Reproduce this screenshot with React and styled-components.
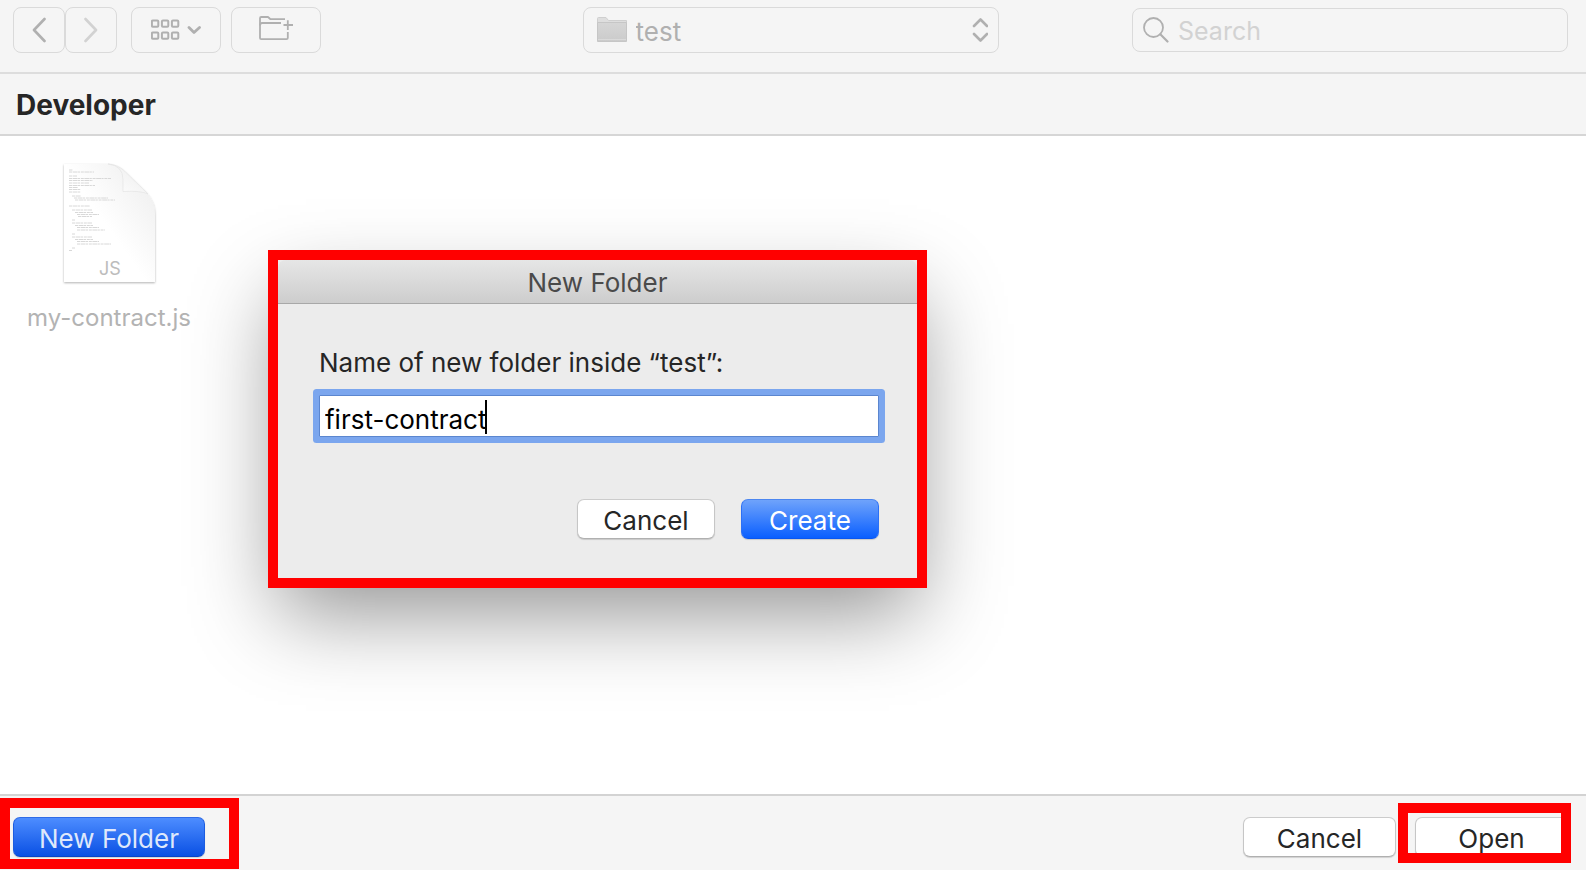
import React, { useLayoutEffect, useRef, useState } from "react";
import styled, { createGlobalStyle, css } from "styled-components";

const GlobalStyle = createGlobalStyle`
  *, *::before, *::after { box-sizing: border-box; }
  body { margin: 0; background: #f5f5f5; }
  body, button, input, select {
    font-family: Inter, "Liberation Sans", sans-serif;
    font-size: 26px;
  }
`;

const Window = styled.div`
  display: flex;
  flex-direction: column;
  min-height: 100vh;
  background: #f5f5f5;
  color: #262626;
`;

const Toolbar = styled.header`
  display: grid;
  grid-template-columns: 1fr minmax(200px, 416px) 1fr;
  align-items: center;
  padding: 7px 18px 19px 13px;
  border-bottom: 2px solid #dddddd;
`;

const ToolGroup = styled.div`
  display: flex;
  gap: ${(p) => p.$gap}px;
`;

const ToolButton = styled.button`
  display: flex;
  align-items: center;
  justify-content: center;
  width: ${(p) => p.$width}px;
  height: 46px;
  padding: 0;
  border: 1px solid #dadada;
  border-radius: 8px;
  background: #f5f5f5;
  color: ${(p) => (p.$faint ? "#d2d2d2" : "#b0b0b0")};
`;

const Field = styled.div`
  display: flex;
  align-items: center;
  height: ${(p) => p.$height}px;
  padding: 0 10px 0 13px;
  border: 1px solid #dadada;
  border-radius: 8px;
  color: #b0b0b0;
`;

const SearchField = styled(Field)`
  justify-self: end;
  width: 100%;
  max-width: 436px;
  padding: 0 10px;
`;

const bareControl = css`
  flex: 1;
  min-width: 0;
  height: 100%;
  padding: 2px 0 0;
  border: 0;
  outline: 0;
  background: transparent;
  appearance: none;
`;

const FolderSelect = styled.select`
  ${bareControl}
  margin-left: 9px;
  color: #b0b0b0;
`;

const SearchInput = styled.input`
  ${bareControl}
  margin-left: 9px;
  font-size: 25px;
  &::placeholder { color: #d2d2d2; opacity: 1; }
`;

const PathBar = styled.h1`
  margin: 0;
  padding: 2px 16px 0;
  border-bottom: 2px solid #d6d6d6;
  font-size: 28px;
  font-weight: 700;
  line-height: 58px;
`;

const Files = styled.main`
  position: relative;
  flex: 1;
  padding: 26px 18px;
  background: #ffffff;
`;

const FileItem = styled.figure`
  display: flex;
  flex-direction: column;
  align-items: center;
  gap: 16px;
  width: 182px;
  margin: 0;
  color: #b3b3b3;
`;

const FileName = styled.figcaption`
  font-size: 24px;
  line-height: 32px;
`;

const Dialog = styled.section`
  position: absolute;
  top: 114px;
  left: 268px;
  width: 659px;
  border: 10px solid #ff0000;
  background: #ececec;
  box-shadow: 0 36px 80px -10px rgba(0, 0, 0, 0.42);
`;

const DialogTitle = styled.h2`
  margin: 0;
  padding-top: 2px;
  border-bottom: 1px solid #a8a8a8;
  border-radius: 8px 8px 0 0;
  background: linear-gradient(#e6e6e6, #cdcdcd);
  color: #4a4a4a;
  font-size: 26px;
  font-weight: 400;
  line-height: 41px;
  text-align: center;
`;

const DialogForm = styled.form`
  display: flex;
  flex-direction: column;
  padding: 43px 38px 39px 41px;
`;

const DialogLabel = styled.label`
  margin-bottom: 16px;
  line-height: 32px;
`;

const NameField = styled.div`
  position: relative;
  margin-bottom: 62px;
`;

const NameInput = styled.input`
  display: block;
  width: 100%;
  height: 42px;
  padding: 6px 5px 0;
  border: 1px solid #5b86cf;
  border-radius: 1px;
  outline: 0;
  background: #ffffff;
  box-shadow: 0 0 0 6px #7ba6ee;
  color: #000000;
  caret-color: transparent;
`;

const Caret = styled.span`
  position: absolute;
  top: 5px;
  width: 2px;
  height: 34px;
  background: #000000;
`;

const DialogActions = styled.div`
  display: flex;
  justify-content: flex-end;
  gap: 26px;
`;

const fills = {
  plain: css`
    border-color: #cccccc #c6c6c6 #b0b0b0;
    background: #ffffff;
    color: #262626;
  `,
  primary: css`
    border-color: #4c86f0 #2c70f5 #0a56f0;
    background: linear-gradient(#6fa3fb, #0a5fff);
    color: #ffffff;
  `,
  pressed: css`
    border-color: #2f6be6 #1c5ce0 #0744c8;
    background: linear-gradient(#4d8dff, #0a50e4);
    color: #dfe8fb;
  `,
};

const PushButton = styled.button`
  width: ${(p) => p.$width}px;
  height: 40px;
  padding: 2px 0 0;
  border: 1px solid;
  border-radius: 7px;
  box-shadow: 0 1px 1px rgba(0, 0, 0, 0.15);
  ${(p) => fills[p.$fill]}
`;

const Footer = styled.footer`
  display: flex;
  justify-content: space-between;
  padding: 21px 18px 13px 13px;
  border-top: 2px solid #d3d3d3;
`;

const FooterActions = styled.div`
  display: flex;
  gap: 19px;
`;

const Marked = styled.div`
  position: relative;
  &::after {
    content: "";
    position: absolute;
    inset: ${(p) => p.$inset};
    border: 10px solid #ff0000;
    pointer-events: none;
  }
`;

const stroke = { fill: "none", stroke: "currentColor", strokeLinecap: "round", strokeLinejoin: "round" };

function Chevron({ flip }) {
  return (
    <svg width="14" height="26" viewBox="0 0 14 26" {...stroke} strokeWidth="2.6" aria-hidden="true">
      <path d={flip ? "M1.5 2 12 13 1.5 24" : "M12.5 2 2 13 12.5 24"} />
    </svg>
  );
}

function GridIcon() {
  return (
    <svg width="50" height="22" viewBox="0 0 50 22" {...stroke} aria-hidden="true">
      {[0, 10, 20].map((x) =>
        [1, 13].map((y) => (
          <rect key={`${x}-${y}`} x={x + 0.9} y={y + 0.4} width="6.4" height="6.4" rx="1" strokeWidth="2" />
        ))
      )}
      <path d="M38 8.5 43 13.5 48.5 8.5" strokeWidth="2.8" />
    </svg>
  );
}

function NewFolderIcon() {
  return (
    <svg width="34" height="28" viewBox="0 0 34 28" {...stroke} strokeWidth="1.8" strokeLinecap="butt" aria-hidden="true">
      <path d="M26 3.2H11.5L9 1H2.2Q1 1 1 2.2V22Q1 23.2 2.2 23.2H27.5Q28.8 23.2 28.8 22V16" />
      <path d="M1 9.5Q1 7 3 7H22M24.5 9H34M28.8 4.2V14" />
    </svg>
  );
}

function FolderIcon() {
  return (
    <svg width="30" height="26" viewBox="0 0 30 26" aria-hidden="true">
      <defs>
        <linearGradient id="folder" x2="0" y2="1">
          <stop stopColor="#d6d6d6" />
          <stop offset="1" stopColor="#cbcbcb" />
        </linearGradient>
      </defs>
      <path d="M.5 6V1.5Q.5.5 1.5.5H9L11.5 3.5H29.5V6Z" fill="#dedede" stroke="#cfcfcf" />
      <path d="M.5 5.500H29.5V24.5H.5Z" fill="url(#folder)" stroke="#c6c6c6" />
      <path d="M1 22.5H29" stroke="#dadada" />
    </svg>
  );
}

function UpDownIcon() {
  return (
    <svg width="16" height="26" viewBox="0 0 16 26" {...stroke} strokeWidth="2.6" aria-hidden="true">
      <path d="M2 9 8.5 2.5 15 9M2 17 8.5 23.5 15 17" />
    </svg>
  );
}

function SearchIcon() {
  return (
    <svg width="26" height="26" viewBox="0 0 26 26" {...stroke} strokeWidth="1.8" aria-hidden="true">
      <circle cx="10.5" cy="10.5" r="9.5" />
      <path d="M17.3 17.3 24.5 24.5" strokeWidth="2.2" />
    </svg>
  );
}

const codeLines = [
  [1, 4], [3, 25], [7, 8], [9.5, 42], [11.5, 24], [14, 20], [16.5, 26], [18.5, 9],
  [20.5, 12], [23, 12], [27, 9, 3], [29, 34, 5], [31, 40, 6], [37, 21], [41, 20, 3],
  [43.5, 18, 6], [45.5, 22, 8], [47.5, 14, 9], [51, 3, 3], [54, 20, 3], [56.5, 18, 6],
  [58.5, 22, 8], [61, 28, 8], [65, 3, 3], [68, 20, 3], [70.5, 18, 6], [72.5, 22, 8],
  [75, 34, 8], [79, 3, 3], [81.5, 3],
];

function ScriptFileIcon() {
  return (
    <svg width="96" height="124" viewBox="0 0 96 124" aria-hidden="true">
      <defs>
        <linearGradient id="sheet" x1="1" y1="0" x2=".45" y2=".5">
          <stop stopColor="#ececec" />
          <stop offset="1" stopColor="#ffffff" />
        </linearGradient>
        <linearGradient id="curl" x1="0" y1="1" x2=".6" y2=".4">
          <stop stopColor="#ffffff" />
          <stop offset="1" stopColor="#f3f3f3" />
        </linearGradient>
        <filter id="drop" x="-10%" y="-10%" width="120%" height="120%">
          <feDropShadow dx="0" dy="1" stdDeviation="1.2" floodOpacity=".3" />
        </filter>
      </defs>
      <path
        d="M3 2H47Q57 2.500 64 9.500L85 30Q94 40 94 52V120H3Z"
        fill="url(#sheet)"
        filter="url(#drop)"
      />
      <path d="M47 2Q62 3.500 62 17.500V29.500Q80 28.500 87 32L64 9.500Q57 2.500 47 2Z" fill="url(#curl)" stroke="#e4e4e4" strokeWidth=".7" />
      <g stroke="#d4d4d4" strokeWidth=".9" strokeDasharray="3 .6 5 .4 2 .8">
        {codeLines.map(([y, w, x = 0]) => (
          <path key={y} d={`M${8 + x} ${y + 7}h${w}`} />
        ))}
      </g>
      <text x="49" y="113" textAnchor="middle" fontSize="18" fill="#bcbcbc">JS</text>
    </svg>
  );
}

function FolderNameField() {
  const input = useRef(null);
  const [name, setName] = useState("first-contract");
  const [caret, setCaret] = useState(0);

  useLayoutEffect(() => {
    const ctx = document.createElement("canvas").getContext("2d");
    const style = getComputedStyle(input.current);
    ctx.font = `${style.fontSize} ${style.fontFamily}`;
    setCaret(Math.round(ctx.measureText(name).width) + 5);
  }, [name]);

  return (
    <NameField>
      <NameInput id="folder-name" ref={input} value={name} onChange={(e) => setName(e.target.value)} />
      <Caret style={{ left: caret }} />
    </NameField>
  );
}

export default function App() {
  return (
    <Window>
      <GlobalStyle />
      <Toolbar>
        <ToolGroup $gap={14}>
          <ToolGroup $gap={0}>
            <ToolButton $width={52} aria-label="Back"><Chevron /></ToolButton>
            <ToolButton $width={52} $faint aria-label="Forward"><Chevron flip /></ToolButton>
          </ToolGroup>
          <ToolGroup $gap={10}>
            <ToolButton $width={90} aria-label="View options"><GridIcon /></ToolButton>
            <ToolButton $width={90} aria-label="Create folder"><NewFolderIcon /></ToolButton>
          </ToolGroup>
        </ToolGroup>
        <Field $height={46}>
          <FolderIcon />
          <FolderSelect aria-label="Current folder" defaultValue="test">
            <option value="test">test</option>
          </FolderSelect>
          <UpDownIcon />
        </Field>
        <SearchField $height={44}>
          <SearchIcon />
          <SearchInput type="text" placeholder="Search" aria-label="Search" />
        </SearchField>
      </Toolbar>
      <PathBar>Developer</PathBar>
      <Files>
        <FileItem>
          <ScriptFileIcon />
          <FileName>my-contract.js</FileName>
        </FileItem>
        <Dialog role="dialog" aria-labelledby="dialog-title">
          <DialogTitle id="dialog-title">New Folder</DialogTitle>
          <DialogForm onSubmit={(e) => e.preventDefault()}>
            <DialogLabel htmlFor="folder-name">Name of new folder inside “test”:</DialogLabel>
            <FolderNameField />
            <DialogActions>
              <PushButton type="button" $width={138} $fill="plain">Cancel</PushButton>
              <PushButton type="submit" $width={138} $fill="primary">Create</PushButton>
            </DialogActions>
          </DialogForm>
        </Dialog>
      </Files>
      <Footer>
        <Marked $inset="-19px -34px -12px -13px">
          <PushButton $width={192} $fill="pressed">New Folder</PushButton>
        </Marked>
        <FooterActions>
          <PushButton $width={153} $fill="plain">Cancel</PushButton>
          <Marked $inset="-14px -3px -6px -17px">
            <PushButton $width={153} $fill="plain">Open</PushButton>
          </Marked>
        </FooterActions>
      </Footer>
    </Window>
  );
}
